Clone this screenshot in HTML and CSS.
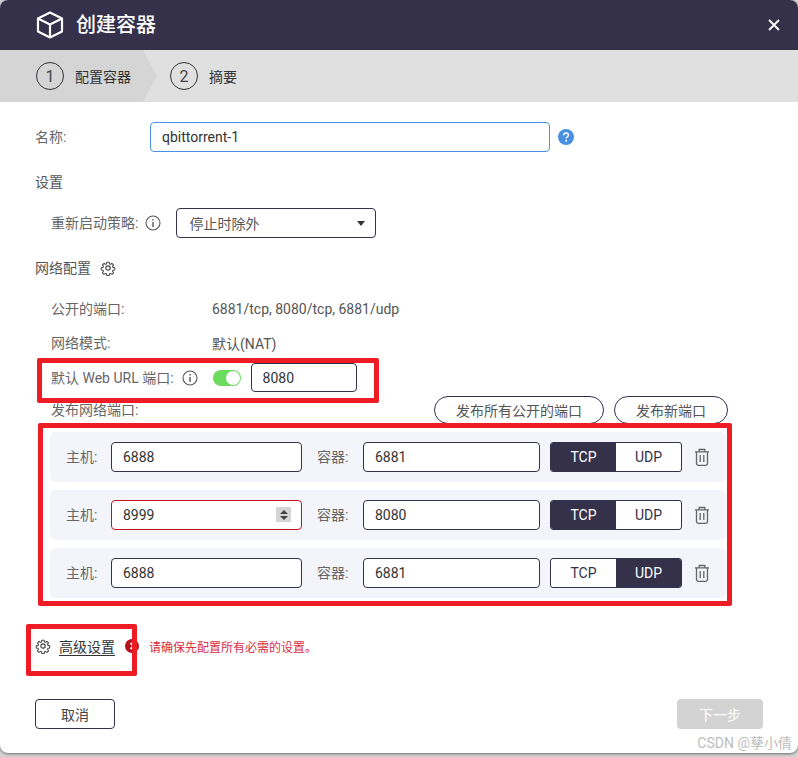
FILE: index.html
```html
<!DOCTYPE html>
<html lang="zh">
<head>
<meta charset="utf-8">
<title>创建容器</title>
<link rel="stylesheet" href="styles.css">
</head>
<body>
<div class="dialog">
  <header class="titlebar">
    <svg class="cube" viewBox="0 0 28 28" width="28" height="28" fill="none" stroke="#fff" stroke-width="2.2" stroke-linejoin="round"><path d="M14 1.5 26 7.5V20.5L14 26.5 2 20.5V7.5Z"/><path d="M2 7.5 14 13.5 26 7.5M14 13.5V26.5"/></svg>
    <h1 class="title">创建容器</h1>
    <svg class="close" viewBox="0 0 12 12" width="12" height="12" stroke="#fff" stroke-width="1.8"><path d="M1 1 11 11M11 1 1 11"/></svg>
  </header>
  <nav class="steps">
    <div class="step step-active"><span class="num">1</span><span>配置容器</span></div>
    <div class="step step-next"><span class="num">2</span><span>摘要</span></div>
  </nav>
  <main class="content">
    <div class="row name-row">
      <label class="label label-name">名称:</label>
      <input class="input input-name" value="qbittorrent-1">
      <svg class="help" viewBox="0 0 16 16" width="16" height="16"><circle cx="8" cy="8" r="8" fill="#4a90e2"/><path d="M5.6 6.2C5.7 4.8 6.7 4 8 4c1.400 0 2.400.8 2.400 2 0 1-.6 1.500-1.300 2-.6.400-1 .8-1 1.500" fill="none" stroke="#fff" stroke-width="1.500"/><circle cx="8.100" cy="11.800" r="1" fill="#fff"/></svg>
    </div>
    <div class="section section-settings">设置</div>
    <div class="row restart-row">
      <span class="label">重新启动策略:</span>
      <svg class="info" viewBox="0 0 16 16" width="16" height="16" fill="none" stroke="#555" stroke-width="1.100"><circle cx="8" cy="8" r="7"/><path d="M8 7v5M8 4v1.600" stroke-width="1.400"/></svg>
      <div class="select"><span>停止时除外</span><i class="caret"></i></div>
    </div>
    <div class="row section section-net">
      <span>网络配置</span>
      <svg class="gear gear-net" viewBox="0 0 24 24" width="16" height="16" fill="none" stroke="#444" stroke-width="1.800" stroke-linejoin="round"><circle cx="12" cy="12" r="3.300"/><path d="M10 1.800h4l.6 3.100 1.700.7 2.600-1.800 2.800 2.800-1.800 2.600.7 1.700 3.100.6v4l-3.100.6-.7 1.700 1.800 2.600-2.800 2.800-2.600-1.800-1.700.7-.6 3.100h-4l-.6-3.100-1.700-.7-2.600 1.800-2.800-2.800 1.800-2.600-.7-1.700-3.100-.6v-4l3.100-.6.7-1.700-1.800-2.600 2.800-2.800 2.600 1.800 1.700-.7z" transform="translate(12 12) scale(.86) translate(-12 -12)"/></svg>
    </div>
    <div class="row info-row info-ports"><span class="label info-key">公开的端口:</span><span class="info-val">6881/tcp, 8080/tcp, 6881/udp</span></div>
    <div class="row info-row info-mode"><span class="label info-key">网络模式:</span><span class="info-val">默认(NAT)</span></div>
    <div class="row url-row">
      <span class="label">默认 Web URL 端口:</span>
      <svg class="info info-url" viewBox="0 0 16 16" width="16" height="16" fill="none" stroke="#555" stroke-width="1.100"><circle cx="8" cy="8" r="7"/><path d="M8 7v5M8 4v1.600" stroke-width="1.400"/></svg>
      <span class="switch"><i class="knob"></i></span>
      <input class="input input-url" value="8080">
    </div>
    <div class="row publish-row">
      <span class="label">发布网络端口:</span>
      <button class="pill pill-all">发布所有公开的端口</button>
      <button class="pill pill-new">发布新端口</button>
    </div>
    <div class="ports">
      <div class="port">
        <span class="label port-host">主机:</span>
        <input class="input input-host" value="6888">
        <span class="label port-cont">容器:</span>
        <input class="input input-cont" value="6881">
        <div class="seg"><span class="seg-on">TCP</span><span>UDP</span></div>
        <svg class="trash" viewBox="0 0 16 18" width="16" height="18" fill="none" stroke="#666" stroke-width="1.300"><path d="M1 3.800h14M5.200 3.500V1.500h5.600v2M2.500 4v11.500q0 1.800 1.800 1.800h7.400q1.800 0 1.800-1.800V4M6.200 7v7M9.800 7v7"/></svg>
      </div>
      <div class="port">
        <span class="label port-host">主机:</span>
        <div class="host-wrap">
          <input class="input input-host input-err" value="8999">
          <span class="spin"><i class="up"></i><i class="down"></i></span>
        </div>
        <span class="label port-cont">容器:</span>
        <input class="input input-cont" value="8080">
        <div class="seg"><span class="seg-on">TCP</span><span>UDP</span></div>
        <svg class="trash" viewBox="0 0 16 18" width="16" height="18" fill="none" stroke="#666" stroke-width="1.300"><path d="M1 3.800h14M5.200 3.500V1.500h5.600v2M2.500 4v11.500q0 1.800 1.800 1.800h7.400q1.800 0 1.800-1.800V4M6.200 7v7M9.800 7v7"/></svg>
      </div>
      <div class="port">
        <span class="label port-host">主机:</span>
        <input class="input input-host" value="6888">
        <span class="label port-cont">容器:</span>
        <input class="input input-cont" value="6881">
        <div class="seg"><span>TCP</span><span class="seg-on">UDP</span></div>
        <svg class="trash" viewBox="0 0 16 18" width="16" height="18" fill="none" stroke="#666" stroke-width="1.300"><path d="M1 3.800h14M5.200 3.500V1.500h5.600v2M2.500 4v11.500q0 1.800 1.800 1.800h7.400q1.800 0 1.800-1.800V4M6.200 7v7M9.800 7v7"/></svg>
      </div>
    </div>
    <div class="row advanced-row">
      <svg class="gear" viewBox="0 0 24 24" width="16" height="16" fill="none" stroke="#444" stroke-width="1.800" stroke-linejoin="round"><circle cx="12" cy="12" r="3.300"/><path d="M10 1.800h4l.6 3.100 1.700.7 2.600-1.800 2.800 2.800-1.800 2.600.7 1.700 3.100.6v4l-3.100.6-.7 1.700 1.800 2.600-2.800 2.800-2.600-1.800-1.700.7-.6 3.100h-4l-.6-3.100-1.700-.7-2.600 1.800-2.800-2.800 1.800-2.600-.7-1.700-3.100-.6v-4l3.100-.6.7-1.700-1.800-2.600 2.800-2.800 2.600 1.800 1.700-.7z" transform="translate(12 12) scale(.86) translate(-12 -12)"/></svg>
      <a class="adv-link">高级设置</a>
      <svg class="err-icon" viewBox="0 0 14 14" width="14" height="14"><circle cx="7" cy="7" r="7" fill="#b80f1c"/><path d="M5.500 4 8.500 7 5.500 10" fill="none" stroke="#fff" stroke-width="1.800"/></svg>
      <span class="err-text">请确保先配置所有必需的设置。</span>
    </div>
    <footer class="row footer">
      <button class="btn-cancel">取消</button>
      <button class="btn-next" disabled>下一步</button>
    </footer>
  </main>
  <div class="mark mark-url"></div>
  <div class="mark mark-ports"></div>
  <div class="mark mark-adv"></div>
  <div class="watermark">CSDN @孳小倩</div>
</div>
</body>
</html>
```

FILE: styles.css
```css
* { box-sizing: border-box; }
html, body { margin: 0; height: 100%; }
body {
  background: #d4d4d4;
  font-family: Roboto, "Noto Sans CJK SC", sans-serif;
  font-size: 14px;
  color: #333;
  overflow: hidden;
}
.dialog {
  position: relative;
  width: 798px;
  height: 753px;
  background: #fff;
  border-radius: 8px;
  overflow: hidden;
  box-shadow: 0 1px 3px rgba(0, 0, 0, .5);
}
.titlebar {
  height: 50px;
  background: #35314b;
  display: flex;
  align-items: center;
  padding: 0 18px 0 36px;
}
.cube { margin-right: 12px; }
.title { flex: 1; margin: 0; font-size: 20px; font-weight: 500; color: #fff; line-height: 50px; }
.steps {
  height: 52px;
  background: #e0e0e0;
  display: flex;
  align-items: center;
}
.step { display: flex; align-items: center; gap: 11px; height: 52px; color: #333; font-size: 14px; }
.step-active {
  width: 157px;
  padding-left: 36px;
  background: #d5d5d5;
  clip-path: polygon(0 0, 143px 0, 157px 50%, 143px 100%, 0 100%);
}
.step-next { padding-left: 13px; }
.num {
  width: 28px;
  height: 28px;
  border: 1.500px solid #333;
  border-radius: 50%;
  display: flex;
  align-items: center;
  justify-content: center;
  font-size: 16px;
  color: #444;
}
.content { padding: 20px 35px 0; }
.row { display: flex; align-items: center; }
.label { color: #666; line-height: 20px; }
.input {
  height: 30px;
  border: 1px solid #35314b;
  border-radius: 4px;
  background: #fff;
  font: inherit;
  color: #333;
  padding: 0 11px;
  outline: none;
}
.name-row { height: 30px; }
.label-name { width: 115px; }
.input-name { width: 400px; border-color: #4a90e2; }
.help { margin-left: 8px; }
.section { color: #555; line-height: 20px; }
.section-settings { margin-top: 20px; }
.restart-row { margin-top: 16px; height: 30px; padding-left: 16px; }
.info { margin-left: 7px; }
.select {
  margin-left: 15px;
  width: 200px;
  height: 30px;
  border: 1px solid #35314b;
  border-radius: 4px;
  display: flex;
  align-items: center;
  justify-content: space-between;
  padding: 0 10px 0 12px;
  color: #555;
}
.caret {
  width: 0;
  height: 0;
  border-left: 4px solid transparent;
  border-right: 4px solid transparent;
  border-top: 5px solid #333;
}
.section-net { margin-top: 20px; height: 20px; }
.gear-net { margin-left: 9px; }
.info-row { padding-left: 16px; height: 20px; }
.info-ports { margin-top: 21px; }
.info-mode { margin-top: 14px; }
.info-key { width: 161px; }
.info-val { color: #555; }
.url-row { margin-top: 10px; height: 29px; padding-left: 16px; }
.info-url { margin-left: 8px; }
.switch {
  margin-left: 15px;
  width: 28px;
  height: 16px;
  border-radius: 8px;
  background: #6bdb5e;
  position: relative;
}
.knob {
  position: absolute;
  right: 1px;
  top: 1px;
  width: 14px;
  height: 14px;
  border-radius: 50%;
  background: #fff;
}
.input-url { margin-left: 10px; width: 106px; height: 29px; }
.publish-row { margin-top: 4px; height: 28px; padding-left: 16px; }
.publish-row .label { flex: 1; }
.pill {
  height: 28px;
  border: 1px solid #35314b;
  border-radius: 14px;
  background: #fff;
  font: inherit;
  color: #555;
  padding: 0;
}
.pill-all { width: 170px; }
.pill-new { width: 114px; margin-left: 10px; margin-right: 35px; }
.ports { margin: 8px 0 0 15px; width: 676px; display: flex; flex-direction: column; gap: 8px; }
.port {
  height: 50px;
  background: #f4f5fa;
  border-radius: 5px;
  display: flex;
  align-items: center;
  padding-left: 16px;
}
.port-host { width: 45px; }
.input-host { width: 191px; }
.host-wrap { position: relative; width: 191px; }
.input-err { border-color: #c5111f; }
.spin {
  position: absolute;
  left: 165px;
  top: 7px;
  width: 15px;
  height: 15px;
  background: #d5d5d5;
  display: flex;
  flex-direction: column;
  align-items: center;
  justify-content: center;
  gap: 2px;
}
.up, .down { width: 0; height: 0; border-left: 4px solid transparent; border-right: 4px solid transparent; }
.up { border-bottom: 4px solid #444; }
.down { border-top: 4px solid #444; }
.port-cont { margin-left: 15px; width: 46px; }
.input-cont { width: 177px; }
.seg {
  margin-left: 10px;
  width: 132px;
  height: 30px;
  border: 1px solid #35314b;
  border-radius: 3px;
  display: flex;
  overflow: hidden;
  background: #fff;
  color: #35314b;
}
.seg span { flex: 1; display: flex; align-items: center; justify-content: center; }
.seg .seg-on { background: #35314b; color: #fff; }
.trash { margin-left: 12px; }
.advanced-row { margin-top: 38px; height: 20px; }
.adv-link { margin-left: 8px; color: #333; text-decoration: underline; text-underline-offset: 3px; }
.err-icon { margin-left: 10px; }
.err-text { margin-left: 10px; font-size: 12px; color: #d8303f; }
.footer { margin-top: 43px; justify-content: space-between; padding-right: 0; }
.btn-cancel, .btn-next { height: 30px; border-radius: 4px; font: inherit; padding: 0; }
.btn-cancel { width: 80px; background: #fff; border: 1px solid #35314b; color: #444; }
.btn-next { width: 86px; background: #d3d3d3; border: none; color: #fff; }
.mark { position: absolute; border: 5px solid #ee1c25; border-radius: 2px; pointer-events: none; }
.mark-url { left: 37px; top: 358px; width: 342px; height: 45px; }
.mark-ports { left: 38px; top: 423px; width: 694px; height: 183px; }
.mark-adv { left: 26px; top: 624px; width: 111px; height: 52px; }
.watermark { position: absolute; right: 6px; bottom: 1px; font-size: 14px; line-height: 18px; color: #bdbdbd; }
```
